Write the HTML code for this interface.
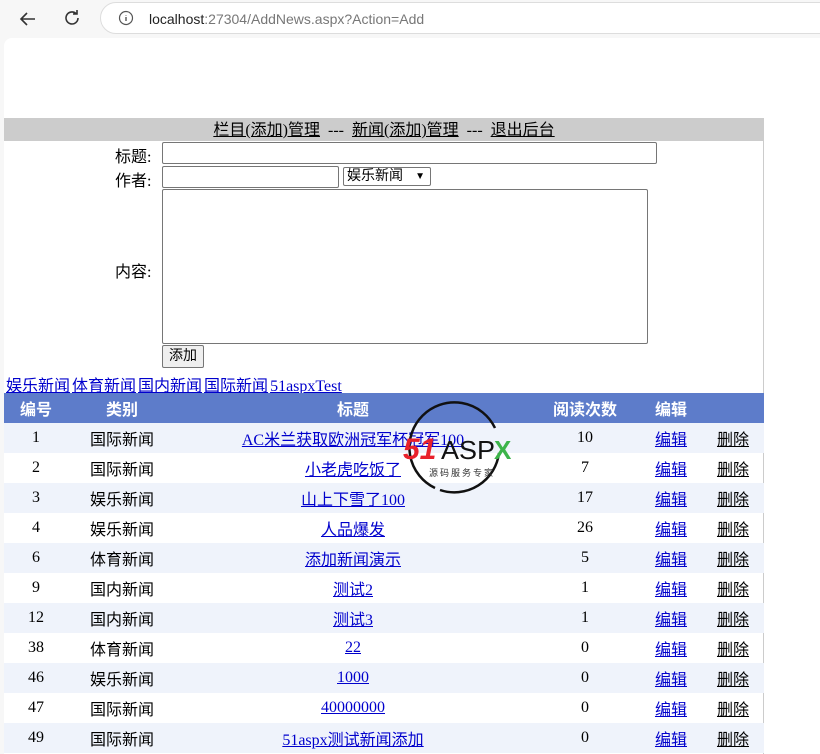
<!DOCTYPE html>
<html><head><meta charset="utf-8"><style>
*{margin:0;padding:0;box-sizing:border-box}
body{width:820px;height:754px;background:#f7f7f7;font-family:"Liberation Serif","Noto Sans CJK SC",serif;font-size:16px;color:#000;position:relative;overflow:hidden}
.chrome{position:absolute;left:0;top:0;width:820px;height:38px;background:#f7f7f7}
.url{position:absolute;left:100px;top:2px;width:740px;height:32px;border:1px solid #ddd;border-radius:16px;background:#fff;font-family:"Liberation Sans",sans-serif;font-size:14px;color:#222;padding:8px 0 0 48px}
.url span{color:#777}
.page{position:absolute;left:4px;top:38px;width:816px;height:716px;background:#fff;border-top-left-radius:8px}
.ab{position:absolute}
a{color:#00c;text-decoration:underline}
.nav{left:0;top:80px;width:760px;height:23px;background:#ccc;text-align:center;line-height:25px;font-size:16px}
.nav a{color:#000}
.in{position:absolute;border:1px solid #767676;border-radius:2px;background:#fff}
.lbl{position:absolute;font-size:16px}
.vline{position:absolute;left:759px;top:80px;width:1px;height:636px;background:#ccc}
table{position:absolute;left:0;top:355px;width:760px;border-collapse:collapse}
th{background:#5d7cca;color:#fff;height:30px;font-weight:bold;font-family:"Noto Sans CJK SC",sans-serif;font-size:16px}
td{height:30px;text-align:center;font-size:16px}
tr:nth-child(even) td{background:#eff3fb}
td a.d{color:#000}
</style></head><body>
<div class="chrome">
<svg class="ab" style="left:18px;top:9px" width="20" height="20" viewBox="0 0 20 20"><path d="M17 10H3M9 4L3 10l6 6" stroke="#333" stroke-width="1.6" fill="none"/></svg>
<svg class="ab" style="left:62px;top:8px" width="20" height="20" viewBox="0 0 20 20"><path d="M16 10a6 6 0 1 1-2-4.5M15 2v4h-4" stroke="#333" stroke-width="1.6" fill="none"/></svg>
<div class="url"><svg class="ab" style="left:17px;top:7px" width="16" height="16" viewBox="0 0 16 16"><circle cx="8" cy="8" r="6.5" stroke="#555" stroke-width="1.2" fill="none"/><path d="M8 7v4M8 5v.5" stroke="#555" stroke-width="1.4"/></svg>localhost<span>:27304/AddNews.aspx?Action=Add</span></div>
</div>
<div class="page">
<div class="ab nav"><a href="#">栏目(添加)管理</a>&nbsp; --- &nbsp;<a href="#">新闻(添加)管理</a>&nbsp; --- &nbsp;<a href="#">退出后台</a></div>
<div class="lbl" style="left:111px;top:105px">标题:</div>
<div class="in" style="left:158px;top:104px;width:495px;height:22px"></div>
<div class="lbl" style="left:111px;top:129px">作者:</div>
<div class="in" style="left:158px;top:128px;width:177px;height:22px"></div>
<div class="in" style="left:339px;top:129px;width:88px;height:19px;font-size:14px;padding-left:3px;line-height:17px">娱乐新闻 <span style="position:absolute;right:5px;font-size:10px">&#9660;</span></div>
<div class="lbl" style="left:111px;top:220px">内容:</div>
<div class="in" style="left:158px;top:151px;width:486px;height:155px"></div>
<div class="in" style="left:158px;top:307px;width:42px;height:23px;background:#efefef;text-align:center;line-height:21px;font-size:14px">添加</div>
<div class="ab" style="left:2px;top:334px;font-size:16px;word-spacing:-2px"><a href="#">娱乐新闻</a> <a href="#">体育新闻</a> <a href="#">国内新闻</a> <a href="#">国际新闻</a> <a href="#">51aspxTest</a></div>
<div class="vline"></div>
<table>
<colgroup><col style="width:64px"><col style="width:108px"><col style="width:354px"><col style="width:110px"><col style="width:62px"><col style="width:62px"></colgroup>
<tr><th>编号</th><th>类别</th><th>标题</th><th>阅读次数</th><th>编辑</th><th></th></tr>
<tr><td>1</td><td>国际新闻</td><td><a href="#">AC米兰获取欧洲冠军杯冠军100</a></td><td>10</td><td><a href="#">编辑</a></td><td><a class="d" href="#">删除</a></td></tr>
<tr><td>2</td><td>国际新闻</td><td><a href="#">小老虎吃饭了</a></td><td>7</td><td><a href="#">编辑</a></td><td><a class="d" href="#">删除</a></td></tr>
<tr><td>3</td><td>娱乐新闻</td><td><a href="#">山上下雪了100</a></td><td>17</td><td><a href="#">编辑</a></td><td><a class="d" href="#">删除</a></td></tr>
<tr><td>4</td><td>娱乐新闻</td><td><a href="#">人品爆发</a></td><td>26</td><td><a href="#">编辑</a></td><td><a class="d" href="#">删除</a></td></tr>
<tr><td>6</td><td>体育新闻</td><td><a href="#">添加新闻演示</a></td><td>5</td><td><a href="#">编辑</a></td><td><a class="d" href="#">删除</a></td></tr>
<tr><td>9</td><td>国内新闻</td><td><a href="#">测试2</a></td><td>1</td><td><a href="#">编辑</a></td><td><a class="d" href="#">删除</a></td></tr>
<tr><td>12</td><td>国内新闻</td><td><a href="#">测试3</a></td><td>1</td><td><a href="#">编辑</a></td><td><a class="d" href="#">删除</a></td></tr>
<tr><td>38</td><td>体育新闻</td><td><a href="#">22</a></td><td>0</td><td><a href="#">编辑</a></td><td><a class="d" href="#">删除</a></td></tr>
<tr><td>46</td><td>娱乐新闻</td><td><a href="#">1000</a></td><td>0</td><td><a href="#">编辑</a></td><td><a class="d" href="#">删除</a></td></tr>
<tr><td>47</td><td>国际新闻</td><td><a href="#">40000000</a></td><td>0</td><td><a href="#">编辑</a></td><td><a class="d" href="#">删除</a></td></tr>
<tr><td>49</td><td>国际新闻</td><td><a href="#">51aspx测试新闻添加</a></td><td>0</td><td><a href="#">编辑</a></td><td><a class="d" href="#">删除</a></td></tr>
</table>
</div>
<svg class="ab" style="left:395px;top:398px" width="125" height="100" viewBox="0 0 125 100">
<path d="M40 90A45 45 0 1 1 100 30" stroke="#111" stroke-width="2.5" fill="none"/>
<path d="M104 55A45 45 0 0 1 45 92" stroke="#111" stroke-width="2.5" fill="none"/>
<text x="8" y="61" font-family="Liberation Sans,sans-serif" font-weight="bold" font-style="italic" font-size="30" fill="#e8202a">51</text>
<text x="46" y="61" font-family="Liberation Sans,sans-serif" font-size="26" fill="#111" textLength="54" lengthAdjust="spacingAndGlyphs">ASP</text>
<text x="99" y="61" font-family="Liberation Sans,sans-serif" font-weight="bold" font-size="26" fill="#3cb44a">X</text>
<text x="34" y="78" font-family="Noto Sans CJK SC,sans-serif" font-size="9" fill="#333" letter-spacing="2">源码服务专家</text>
</svg>
</body></html>
